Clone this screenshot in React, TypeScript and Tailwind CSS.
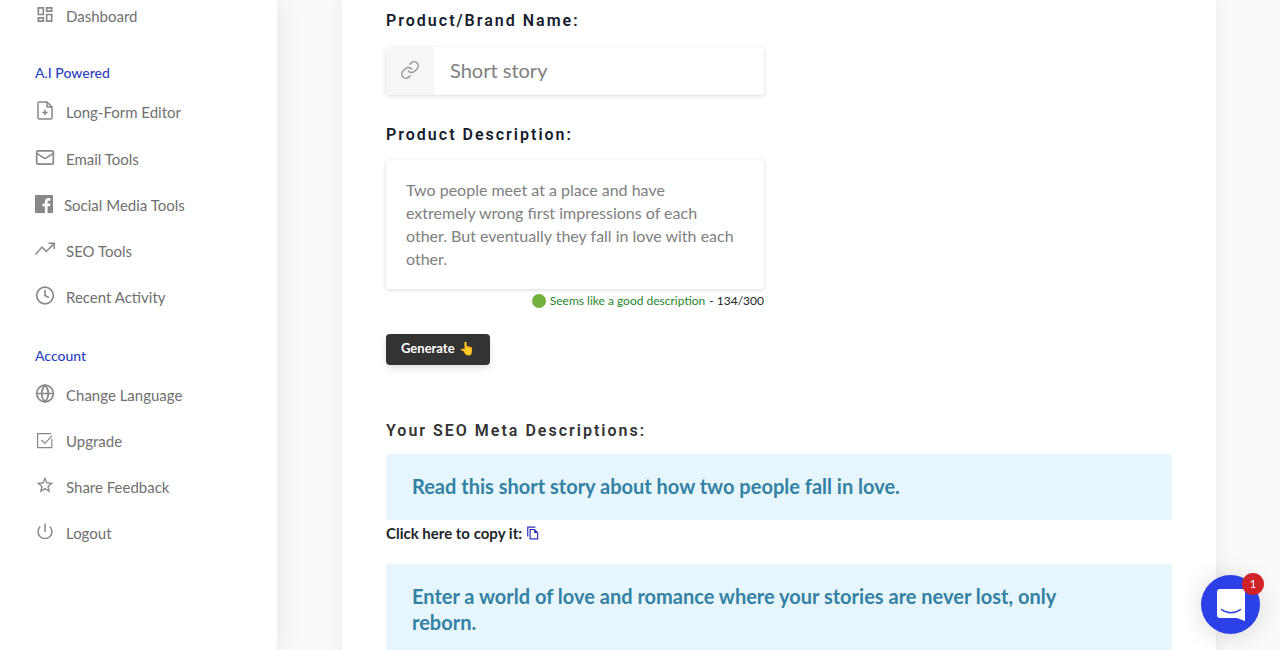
import { useState } from "react";
import type { ReactNode } from "react";
import { Clock, Globe, Link, Mail } from "lucide-react";
import { MdOutlineDashboard, MdStarBorder } from "react-icons/md";

type NavItem = {
  label: string;
  icon: ReactNode;
};

const AI_ITEMS: NavItem[] = [
  { label: "Long-Form Editor", icon: <FileAddIcon /> },
  { label: "Email Tools", icon: <Mail className="h-[21px] w-5" /> },
  { label: "Social Media Tools", icon: <FacebookIcon /> },
  { label: "SEO Tools", icon: <TrendIcon /> },
  { label: "Recent Activity", icon: <Clock className="h-[21px] w-5" /> },
];

const ACCOUNT_ITEMS: NavItem[] = [
  { label: "Change Language", icon: <Globe className="h-[21px] w-5" /> },
  { label: "Upgrade", icon: <CheckBoxIcon /> },
  { label: "Share Feedback", icon: <MdStarBorder className="h-5 w-5" /> },
  { label: "Logout", icon: <PowerIcon /> },
];

const RESULTS = [
  "Read this short story about how two people fall in love.",
  "Enter a world of love and romance where your stories are never lost, only reborn.",
];

function FileAddIcon() {
  return (
    <svg viewBox="0 0 20 21" className="h-[21px] w-5" fill="none" stroke="currentColor" strokeWidth="1.500" strokeLinejoin="round">
      <path d="M12 2H4.500A1.500 1.500 0 0 0 3 3.500v14A1.500 1.500 0 0 0 4.500 19h11a1.500 1.500 0 0 0 1.500-1.500V7z" />
      <path d="M12 2v5h5M10 9.800v5.400M7.300 12.500h5.400" />
    </svg>
  );
}

function FacebookIcon() {
  return (
    <svg viewBox="0 -1 18 19" className="h-[19px] w-[18px]" fill="currentColor">
      <path d="M0 0h18v18h-5.400v-6.700h2.300l.4-2.700h-2.700V7c0-.8.3-1.300 1.400-1.300h1.400V3.200c-.3 0-1.100-.1-2-.1-2.100 0-3.500 1.200-3.500 3.500v2H7.500v2.700h2.400V18H0z" />
    </svg>
  );
}

function TrendIcon() {
  return (
    <svg viewBox="0 0 20 20" className="h-5 w-5" fill="none" stroke="currentColor" strokeWidth="1.500">
      <path d="M.5 15.500L7 8l4.200 4.500L19 4.600" />
      <path d="M13.500 4.300h5.800v5.700" />
    </svg>
  );
}

function CheckBoxIcon() {
  return (
    <svg viewBox="0 0 20 19" className="h-[19px] w-5" fill="none" stroke="currentColor" strokeWidth="1.200">
      <path d="M16 3.600H2.600v14h14.200V9" />
      <path d="M6.500 10l3.300 3.300L17 5.800" />
    </svg>
  );
}

function PowerIcon() {
  return (
    <svg viewBox="0 0 20 20" className="h-[21px] w-5" fill="none" stroke="currentColor" strokeWidth="1.500">
      <path d="M10 2v8.500" />
      <path d="M5.200 5a7 7 0 1 0 9.600 0" />
    </svg>
  );
}

function CopyIcon() {
  return (
    <svg viewBox="0 0 24 24" className="size-3.5" fill="currentColor">
      <path d="M16 1H2v17h2V3h12V1zm-1 4H6v18h15V11l-6-6zM8 21V7h6v5h5v9H8z" />
    </svg>
  );
}

function NavLink({ item }: { item: NavItem }) {
  return (
    <li>
      <a href="#" className="flex items-center gap-[11px] text-[#707070] hover:text-black">
        <span className="pb-[3px] text-[#888]">{item.icon}</span>
        {item.label}
      </a>
    </li>
  );
}

function Sidebar() {
  return (
    <aside className="w-[277px] shrink-0 bg-white pl-[35px] text-[15px] shadow-[0_0_24px_rgba(0,0,0,0.1)]">
      <nav className="leading-5">
        <ul className="pt-1">
          <NavLink item={{ label: "Dashboard", icon: <MdOutlineDashboard className="h-[21px] w-5" /> }} />
        </ul>
        <h2 className="mt-[35px] text-sm leading-5 font-medium text-[#2b3fc0]">A.I Powered</h2>
        <ul className="mt-[17px] flex flex-col gap-[23px]">
          {AI_ITEMS.map((item) => (
            <NavLink key={item.label} item={item} />
          ))}
        </ul>
        <h2 className="mt-[37px] text-sm leading-5 font-medium text-[#2b3fc0]">Account</h2>
        <ul className="mt-[17px] flex flex-col gap-[23px]">
          {ACCOUNT_ITEMS.map((item) => (
            <NavLink key={item.label} item={item} />
          ))}
        </ul>
      </nav>
    </aside>
  );
}

function Result({ text }: { text: string }) {
  return (
    <article className="mb-5">
      <p className="rounded-[3px] bg-[#e6f6fc] pt-[19px] pr-20 pb-[21px] pl-[26px] text-xl leading-[26px] font-bold text-[#3182a3]">
        {text}
      </p>
      <div className="flex h-6 items-center gap-1 pt-0.5 text-[15px] leading-5 font-bold text-[#212529]">
        Click here to copy it:
        <button
          type="button"
          aria-label="Copy"
          className="text-[#2b2fc0]"
          onClick={() => navigator.clipboard.writeText(text)}
        >
          <CopyIcon />
        </button>
      </div>
    </article>
  );
}

function ChatLauncher() {
  return (
    <button
      type="button"
      aria-label="Open chat"
      className="fixed right-5 bottom-4 grid size-[59px] place-items-center rounded-full bg-[#2b40e6] shadow-[0_2px_24px_rgba(0,0,0,0.15)]"
    >
      <svg viewBox="0 0 28 32" className="h-8 w-7">
        <path d="M3 0h22a3 3 0 0 1 3 3v29c-3-1-5-2.200-8-3H3a3 3 0 0 1-3-3V3a3 3 0 0 1 3-3z" fill="#fff" />
        <path d="M4.500 20.500c5.500 4.300 13.500 4.300 19 0" fill="none" stroke="#2b40e6" strokeWidth="1.500" strokeLinecap="round" />
      </svg>
      <span className="absolute -top-0.5 -right-1 grid size-[22px] place-items-center rounded-full bg-[#cf2327] text-xs text-white">
        1
      </span>
    </button>
  );
}

export default function App() {
  const [name, setName] = useState("");
  const [description, setDescription] = useState("");

  return (
    <div className="flex h-screen overflow-y-auto bg-[#fafafa] font-['Lato',sans-serif] [scrollbar-width:none]">
      <Sidebar />
      <main className="mr-16 ml-[65px] h-fit min-h-full min-w-0 flex-1 bg-white px-11 pt-[9px] shadow-[0_0_16px_rgba(0,0,0,0.08)]">
        <form className="w-[378px]" onSubmit={(e) => e.preventDefault()}>
          <label htmlFor="name" className="block font-['Roboto',sans-serif] text-base leading-6 font-semibold tracking-[2px] text-[#161c2d]">
            Product/Brand Name:
          </label>
          <div className="mt-[14px] flex h-12 overflow-hidden rounded-[3px] shadow-[0_1px_4px_rgba(0,0,0,0.15)]">
            <span className="grid w-12 place-items-center bg-[#f6f6f6] pb-0.5 text-[#999]">
              <Link className="size-5" strokeWidth={1.75} />
            </span>
            <input
              id="name"
              value={name}
              onChange={(e) => setName(e.target.value)}
              placeholder="Short story"
              className="min-w-0 flex-1 px-4 pb-0.5 text-xl placeholder:text-[#808080] focus:outline-none"
            />
          </div>
          <label htmlFor="description" className="mt-7 block font-['Roboto',sans-serif] text-base leading-6 font-semibold tracking-[2px] text-[#161c2d]">
            Product Description:
          </label>
          <textarea
            id="description"
            value={description}
            onChange={(e) => setDescription(e.target.value)}
            placeholder="Two people meet at a place and have extremely wrong first impressions of each other. But eventually they fall in love with each other."
            className="mt-[13px] block h-[129px] w-full resize-none rounded-[3px] py-[18px] pr-7 pl-5 text-base leading-[23px] shadow-[0_1px_4px_rgba(0,0,0,0.15)] placeholder:text-[#808080] focus:outline-none"
          />
          <p className="flex items-center justify-end gap-1 pt-1 text-xs leading-4 text-[#212529]">
            <span className="size-3.5 rounded-full bg-[#73b13d]" />
            <span className="text-[#28852c]">Seems like a good description</span>
            <span>- 134/300</span>
          </p>
          <button className="mt-[25px] flex h-[31px] items-center gap-1 rounded-[4px] bg-[#333] px-[15px] pb-0.5 text-[13px] font-bold text-white shadow-[0_3px_6px_rgba(0,0,0,0.12)]">
            Generate
            <span>👆</span>
          </button>
        </form>
        <section>
          <h2 className="mt-[54px] mb-[11px] font-['Roboto',sans-serif] text-base leading-6 font-semibold tracking-[2px] text-[#333]">
            Your SEO Meta Descriptions:
          </h2>
          {RESULTS.map((text) => (
            <Result key={text} text={text} />
          ))}
        </section>
      </main>
      <ChatLauncher />
    </div>
  );
}
